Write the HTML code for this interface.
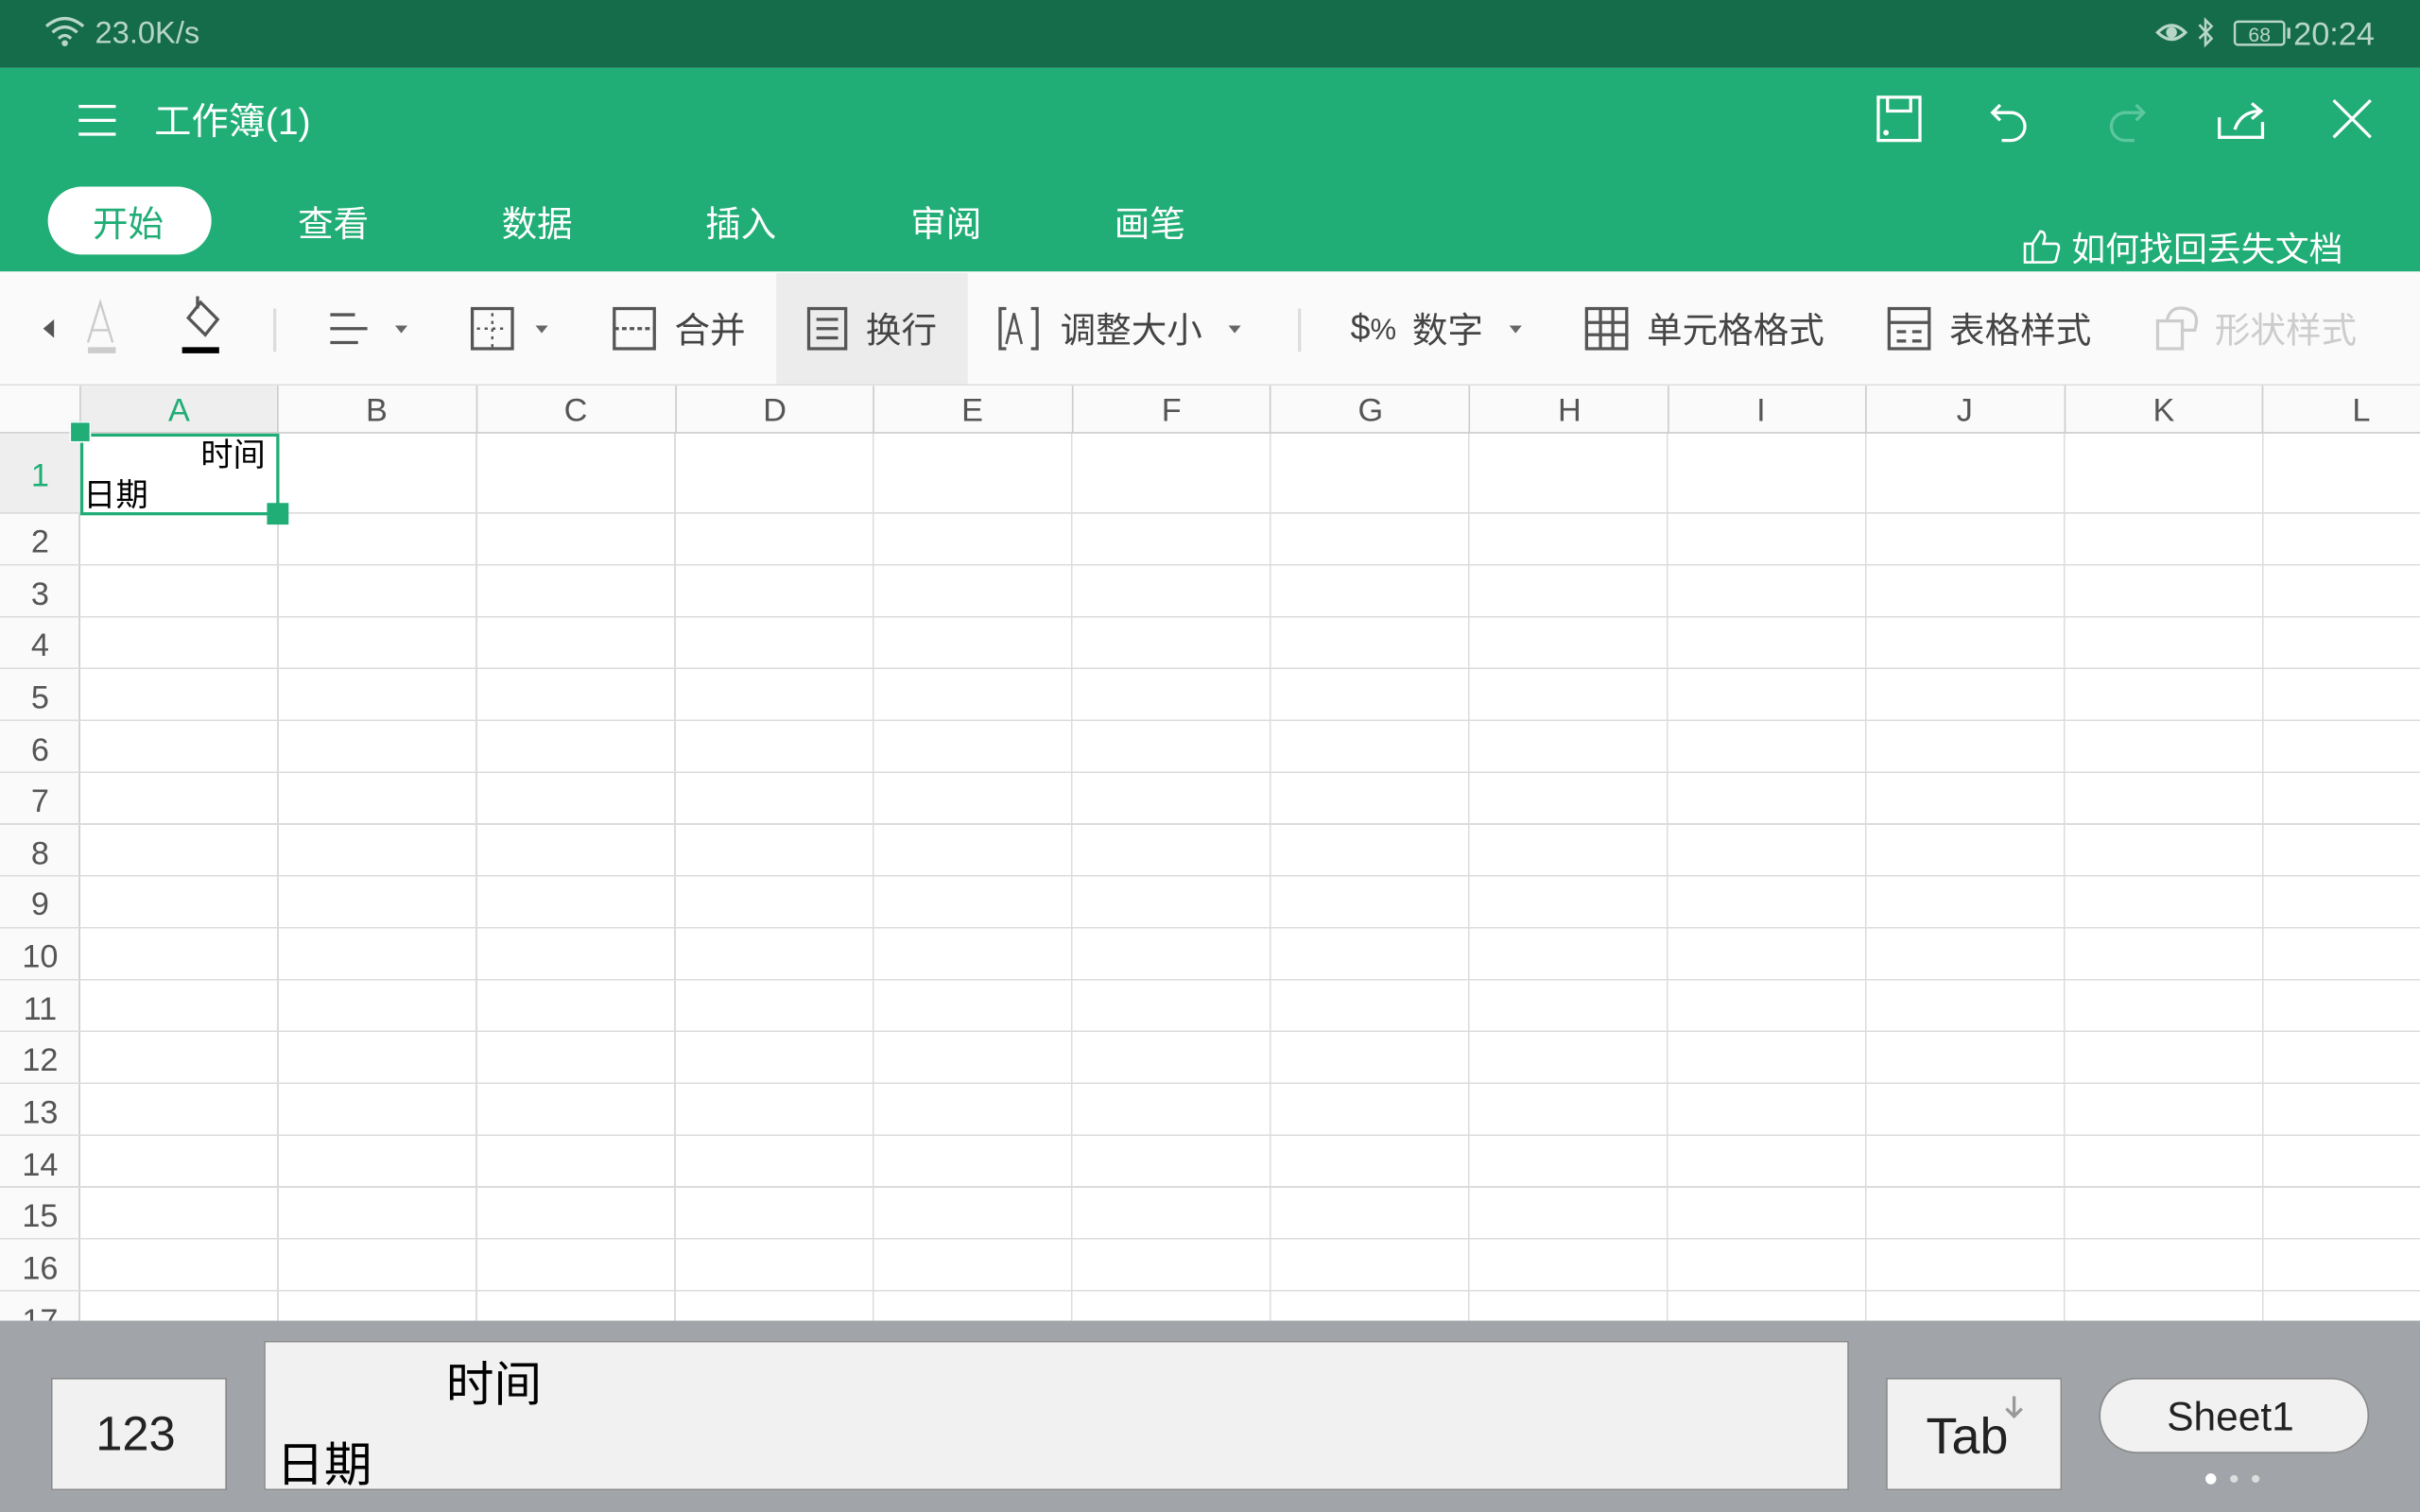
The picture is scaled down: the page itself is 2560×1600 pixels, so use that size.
<!DOCTYPE html>
<html><head><meta charset="utf-8"><style>
*{margin:0;padding:0;box-sizing:border-box}
html,body{width:2560px;height:1600px;overflow:hidden;background:#fff}
#r{position:absolute;left:0;top:0;width:1568px;height:980px;transform:scale(1.632653);transform-origin:0 0;font-family:"Liberation Sans","Noto Sans CJK SC",sans-serif}
.a{position:absolute}
.t{position:absolute;white-space:nowrap}
</style></head><body><div id="r">
<div class="a" style="left:0;top:0;width:1568px;height:44px;background:#156c4a"></div>
<div class="t" style="left:28px;top:10px;font-size:20px;color:#b8d6c8">
<svg width="28" height="20" viewBox="0 0 28 20" style="vertical-align:-2px"><path d="M2 7Q14-3 26 7M6 11Q14 4 22 11M10 15Q14 11 18 15" fill="none" stroke="#b8d6c8" stroke-width="2"/><circle cx="14" cy="18" r="2" fill="#b8d6c8"/></svg> 23.0K/s</div>
<div class="t" style="left:1396px;top:10px;font-size:21px;color:#b8d6c8">
<svg width="90" height="22" viewBox="0 0 90 22" style="vertical-align:-3px"><path d="M2 11Q11 2 20 11Q11 20 2 11Z" fill="none" stroke="#b8d6c8" stroke-width="2"/><circle cx="11" cy="11" r="3.5" fill="#b8d6c8"/><path d="M29 6l8 9-4 4V3l4 4-8 8" fill="none" stroke="#b8d6c8" stroke-width="1.6"/><rect x="52" y="4" width="32" height="15" rx="2" fill="none" stroke="#b8d6c8" stroke-width="1.5"/><rect x="86" y="8" width="2" height="7" fill="#b8d6c8"/><text x="68" y="17" font-size="13" fill="#b8d6c8" text-anchor="middle" font-family="Liberation Sans">68</text></svg>20:24</div>
<div class="a" style="left:0;top:44px;width:1568px;height:132px;background:#20ad76"></div>
<svg class="a" style="left:50px;top:66px" width="26" height="24"><path d="M1 3h24M1 12h24M1 21h24" stroke="#fff" stroke-width="2"/></svg>
<div class="t" style="left:100px;top:59px;font-size:24px;color:#fff">工作簿(1)</div>
<svg class="a" style="left:1210px;top:58px" width="330" height="40" viewBox="0 0 330 40" fill="none" stroke="#fff" stroke-width="2">
<path d="M7 5h27v28H7zM13 5v9h15V5"/><circle cx="12" cy="28" r="0.8" fill="#fff"/>
<path d="M86 10l-5 5 5 5M81 15h12a9 9 0 0 1 0 18h-6"/>
<path d="M174 10l5 5-5 5M179 15h-12a9 9 0 0 0 0 18h6" stroke="#5cc79c"/>
<path d="M228 18v13h28V21M238 26q4-12 17-12M249 9l6 5-6 5"/>
<path d="M302 7l24 24M326 7l-24 24"/></svg>
<div class="a" style="left:31px;top:121px;width:106px;height:44px;border-radius:22px;background:#fff"></div>
<div class="t" style="left:60px;top:126px;font-size:23px;color:#20ad76">开始</div>
<div class="t" style="left:193px;top:126px;font-size:23px;color:#fff">查看</div>
<div class="t" style="left:325px;top:126px;font-size:23px;color:#fff">数据</div>
<div class="t" style="left:457px;top:126px;font-size:23px;color:#fff">插入</div>
<div class="t" style="left:590px;top:126px;font-size:23px;color:#fff">审阅</div>
<div class="t" style="left:722px;top:126px;font-size:23px;color:#fff">画笔</div>
<div class="t" style="left:1310px;top:144px;font-size:22px;color:#fff"><svg width="26" height="24" viewBox="0 0 26 24" style="vertical-align:-3px" fill="none" stroke="#fff" stroke-width="1.6"><path d="M2 10h5v12H2zM7 10l5-8q3 0 3 4l-1 4h8q2 0 2 3l-2 8q-1 1-3 1H7"/></svg> 如何找回丢失文档</div>
<div class="a" style="left:0;top:176px;width:1568px;height:74px;background:#fafafa;border-bottom:1px solid #ddd"></div>
<div class="a" style="left:503px;top:177px;width:124px;height:72px;background:#ececec"></div>
<svg class="a" style="left:0;top:176px" width="1568" height="74" viewBox="0 0 1568 74" fill="none" stroke="#555" stroke-width="2">
<path d="M35 31v12l-7-6z" fill="#555" stroke="none"/>
<path d="M57 46l8-26 8 26M60 38h10" stroke="#ccc" stroke-width="1.5"/><rect x="57" y="49" width="18" height="4" fill="#ccc" stroke="none"/>
<path d="M130 20l11 11-8 10-11-11z"/><path d="M128 16v8" /><rect x="118" y="49" width="24" height="4" fill="#000" stroke="none"/>
<path d="M178 24v28" stroke="#ddd"/>
<path d="M214 28h16M214 37h24M214 46h18"/><path d="M256 35h8l-4 5z" fill="#666" stroke="none"/>
<rect x="306" y="24" width="26" height="26"/><path d="M319 27v22M309 37h20" stroke-dasharray="2 3" stroke-width="1.5"/><path d="M347 35h8l-4 5z" fill="#666" stroke="none"/>
<rect x="398" y="24" width="26" height="26"/><path d="M398 37h26" stroke-dasharray="3 2"/>
<rect x="524" y="24" width="24" height="26"/><path d="M529 31h14M529 37h14M529 43h14"/>
<path d="M652 24h-4v26h4M668 24h4v26h-4" /><path d="M652 47l5-20 5 20M654 40h6" stroke-width="1.6"/><path d="M796 35h8l-4 5z" fill="#666" stroke="none"/>
<path d="M842 24v28" stroke="#ddd"/>
<path d="M978 35h8l-4 5z" fill="#666" stroke="none"/>
<rect x="1028" y="24" width="26" height="26"/><path d="M1028 33h26M1028 41h26M1037 24v26M1045 24v26"/>
<rect x="1224" y="24" width="26" height="26"/><path d="M1224 33h26M1229 39h6M1239 39h6M1229 45h6M1239 45h6"/>
<rect x="1398" y="32" width="16" height="18" stroke="#ccc"/><path d="M1404 32q2-10 12-8t6 14h-8" stroke="#ccc"/>
</svg>
<div class="t" style="left:875px;top:199px;font-size:23px;color:#444">$<span style="font-size:19px">%</span></div>
<div class="t" style="left:437px;top:195px;font-size:23px;color:#444">合并</div>
<div class="t" style="left:561px;top:195px;font-size:23px;color:#444">换行</div>
<div class="t" style="left:687px;top:195px;font-size:23px;color:#444">调整大小</div>
<div class="t" style="left:915px;top:195px;font-size:23px;color:#444">数字</div>
<div class="t" style="left:1067px;top:195px;font-size:23px;color:#444">单元格格式</div>
<div class="t" style="left:1263px;top:195px;font-size:23px;color:#444">表格样式</div>
<div class="t" style="left:1435px;top:195px;font-size:23px;color:#ccc">形状样式</div>
<!-- grid -->
<div class="a" style="left:0;top:250px;width:1568px;height:606px;background:
repeating-linear-gradient(to right,transparent 0,transparent 127.6px,#dcdcdc 127.6px,#dcdcdc 128.6px) 52px 0/100% 100% no-repeat,#fff"></div>
<div class="a" style="left:0;top:250px;width:1568px;height:31px;background:#fafafa;border-bottom:1px solid #ccc"></div>
<div class="a" style="left:52px;top:250px;width:128px;height:31px;background:#eee;border-bottom:1px solid #ccc"></div>
<div class="a" style="left:0;top:281px;width:52px;height:575px;background:#fafafa;border-right:1px solid #ccc"></div>
<div class="a" style="left:0;top:281px;width:52px;height:52px;background:#eee"></div>
<div class="a" style="left:0;top:250px;width:1568px;height:606px;background:repeating-linear-gradient(to bottom,transparent 0,transparent 32.6px,#dcdcdc 32.6px,#dcdcdc 33.6px) 0 83px/100% 100% no-repeat"></div>
<div class="a" style="left:0;top:332px;width:1568px;height:1px;background:#dcdcdc"></div>
<svg class="a" style="left:0;top:250px" width="1568" height="31" font-family="Liberation Sans" font-size="21" fill="#555" text-anchor="middle">
<text x="116" y="23" fill="#20ad76">A</text><text x="244" y="23">B</text><text x="373" y="23">C</text><text x="502" y="23">D</text><text x="630" y="23">E</text><text x="759" y="23">F</text><text x="888" y="23">G</text><text x="1017" y="23">H</text><text x="1141" y="23">I</text><text x="1273" y="23">J</text><text x="1402" y="23">K</text><text x="1530" y="23">L</text>
<path d="M180 0v31M309 0v31M438 0v31M566 0v31M695 0v31M823 0v31M952 0v31M1081 0v31M1209 0v31M1338 0v31M1466 0v31M52 0v31" stroke="#ccc"/>
</svg>
<svg class="a" style="left:0;top:281px" width="52" height="575" font-family="Liberation Sans" font-size="21" fill="#555" text-anchor="middle">
<text x="26" y="34" fill="#20ad76">1</text><text x="26" y="77">2</text><text x="26" y="111">3</text><text x="26" y="144">4</text><text x="26" y="178">5</text><text x="26" y="212">6</text><text x="26" y="245">7</text><text x="26" y="279">8</text><text x="26" y="312">9</text><text x="26" y="346">10</text><text x="26" y="380">11</text><text x="26" y="413">12</text><text x="26" y="447">13</text><text x="26" y="481">14</text><text x="26" y="514">15</text><text x="26" y="548">16</text><text x="26" y="582">17</text>
</svg>
<div class="a" style="left:52px;top:281px;width:129px;height:53px;border:2px solid #20ad76;background:#fff"></div>
<div class="t" style="left:130px;top:279px;font-size:21px;color:#000">时间</div>
<div class="t" style="left:54px;top:305px;font-size:21px;color:#000">日期</div>
<div class="a" style="left:45px;top:273px;width:14px;height:14px;background:#20ad76;border:1px solid #fff"></div>
<div class="a" style="left:173px;top:326px;width:14px;height:14px;background:#20ad76"></div>
<!-- bottom -->
<div class="a" style="left:0;top:856px;width:1568px;height:124px;background:#a1a4a8"></div>
<div class="a" style="left:33px;top:893px;width:114px;height:73px;background:#f1f1f1;border:1px solid #888"></div>
<div class="t" style="left:62px;top:912px;font-size:31px;color:#222">123</div>
<div class="a" style="left:171px;top:869px;width:1027px;height:97px;background:#f1f1f1;border:1px solid #888"></div>
<div class="t" style="left:289px;top:872px;font-size:31px;color:#000">时间</div>
<div class="t" style="left:179px;top:924px;font-size:31px;color:#000">日期</div>
<div class="a" style="left:1222px;top:893px;width:114px;height:73px;background:#f1f1f1;border:1px solid #888"></div>
<div class="t" style="left:1248px;top:912px;font-size:33px;color:#222">Tab</div>
<svg class="a" style="left:1298px;top:905px" width="14" height="16"><path d="M7 0v12M2 8l5 5 5-5" stroke="#999" stroke-width="2" fill="none"/></svg>
<div class="a" style="left:1360px;top:893px;width:175px;height:49px;border-radius:25px;background:#f1f1f1;border:1px solid #888"></div>
<div class="t" style="left:1404px;top:903px;font-size:26px;color:#222">Sheet1</div>
<div class="a" style="left:1429px;top:955px;width:7px;height:7px;border-radius:50%;background:#fff"></div>
<div class="a" style="left:1445px;top:956px;width:5px;height:5px;border-radius:50%;background:#ddd"></div>
<div class="a" style="left:1459px;top:956px;width:5px;height:5px;border-radius:50%;background:#ddd"></div>
</div></body></html>
